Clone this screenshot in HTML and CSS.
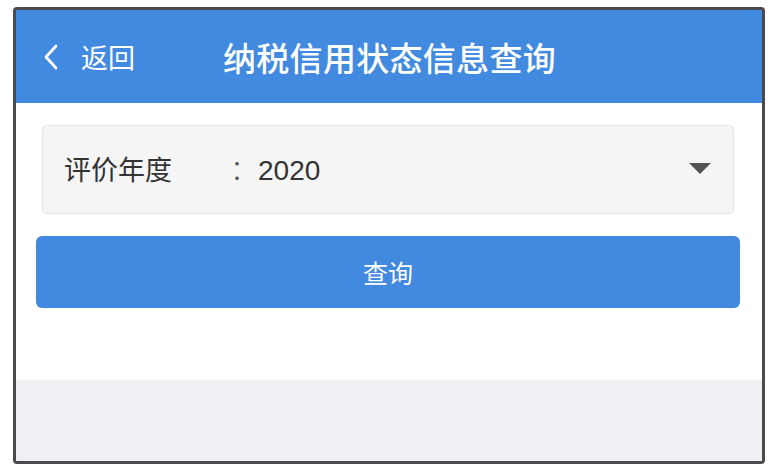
FILE: index.html
```html
<!DOCTYPE html>
<html lang="zh-CN">
  <head>
    <meta charset="utf-8" />
    <meta name="viewport" content="width=device-width, initial-scale=1.0" />
    <title>纳税信用状态信息查询</title>
    <link rel="stylesheet" href="styles.css">
  </head>
  <body>
    <div class="phone">
      <header class="topbar">
        <a class="back" href="#">
          <svg class="chevron" width="16" height="28" viewBox="0 0 16 28">
            <path d="M13 3 L3 14 L13 25" fill="none" stroke="#fff" stroke-width="2.8" stroke-linecap="round" stroke-linejoin="round" />
          </svg>
          <span>返回</span>
        </a>
        <h1 class="title">纳税信用状态信息查询</h1>
      </header>
      <main class="content">
        <div class="select">
          <span class="label">评价年度</span>
          <span class="value"><span class="colon">：</span>2020</span>
          <span class="caret"></span>
        </div>
        <button class="query" type="button">查询</button>
      </main>
      <div class="footer"></div>
    </div>
  </body>
</html>
```

FILE: styles.css
```css
body {
  margin: 0;
  background: #fff;
  font-family: "Noto Sans CJK SC", "Noto Sans", sans-serif;
}

.phone {
  margin: 7px 0 0 13px;
  width: 746px;
  border: 3px solid #4a4a4c;
  border-radius: 4px;
  overflow: hidden;
  background: #fff;
}

.topbar {
  display: flex;
  align-items: center;
  height: 93px;
  padding-left: 27px;
  background-color: #418ae0;
  color: #fff;
}

.back {
  display: flex;
  align-items: center;
  color: #fff;
  text-decoration: none;
  font-size: 27px;
}

.chevron {
  margin-right: 22px;
}

.title {
  margin: 0 0 0 88px;
  font-size: 33px;
  font-weight: 500;
  letter-spacing: 0.3px;
}

.content {
  padding: 22px 22px 72px 20px;
}

.select {
  display: flex;
  align-items: center;
  height: 84px;
  margin: 0 6px;
  padding: 0 22px 3px 21px;
  background: #f5f5f5;
  border: 1px solid #e6e6e6;
  border-radius: 4px;
  color: #333;
  font-size: 27px;
}

.label {
  width: 166px;
}

.value {
  flex: 1;
  font-family: "Liberation Sans", "Noto Sans CJK SC", sans-serif;
  font-size: 28px;
}

.colon {
  font-family: "Noto Sans CJK SC", sans-serif;
  font-weight: 300;
  color: #555;
}

.caret {
  width: 0;
  height: 0;
  border-left: 11px solid transparent;
  border-right: 11px solid transparent;
  border-top: 11px solid #555;
}

.query {
  display: block;
  width: 100%;
  height: 72px;
  margin-top: 22px;
  border: none;
  border-radius: 6px;
  background-color: #418ae0;
  color: #fff;
  font-family: inherit;
  font-size: 25px;
}

.footer {
  height: 81px;
  background: #efeff4;
}
```
